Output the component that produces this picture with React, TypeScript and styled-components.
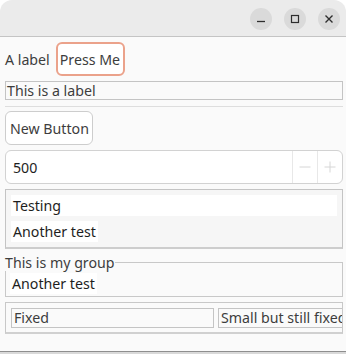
import React from "react";
import styled, { createGlobalStyle } from "styled-components";

const GlobalStyle = createGlobalStyle`
  html, body {
    margin: 0;
    padding: 0;
    background: #d9d9d9;
  }
  * {
    box-sizing: border-box;
  }
  body {
    font-family: "Noto Sans", "DejaVu Sans", sans-serif;
    font-size: 14.2px;
    color: #3d3d3d;
  }
`;

const Window = styled.div`
  width: 346px;
  height: 352px;
  display: flex;
  flex-direction: column;
  background: #ffffff;
`;

const TitleBar = styled.header`
  height: 37px;
  flex: none;
  background: #ebebeb;
  border-bottom: 1px solid #c4c4c4;
  border-radius: 12px 12px 0 0;
  display: flex;
  align-items: center;
  justify-content: flex-end;
  gap: 12px;
  padding-right: 6px;
`;

const WinButton = styled.button`
  width: 22px;
  height: 22px;
  border-radius: 50%;
  border: none;
  padding: 0;
  background: #dadada;
  display: flex;
  align-items: center;
  justify-content: center;
  margin-top: 1px;
`;

const Body = styled.main`
  flex: 1;
  background: #fafafa;
  border-bottom: 1px solid #8e8e8e;
  padding: 5px 3px 0 5px;
  display: flex;
  flex-direction: column;
  gap: 5px;
`;

const Row = styled.div`
  display: flex;
  align-items: center;
  gap: 6px;
`;

const Text = styled.span`
  line-height: 17px;
  white-space: nowrap;
`;

const Button = styled.button<{ $focused?: boolean }>`
  height: 34px;
  font: inherit;
  color: #3d3d3d;
  background: #ffffff;
  border-radius: 6px;
  border: ${(p) => (p.$focused ? "2px solid #eba28b" : "1px solid #cdcdcd")};
  padding: ${(p) => (p.$focused ? "0 3px 0 2px" : "0 3px 0 4px")};
  align-self: flex-start;
  cursor: pointer;
`;

const BoxedLabel = styled.div`
  height: 19px;
  border: 1px solid #c4c4c4;
  padding: 0 1px;
  line-height: 17px;
  white-space: nowrap;
  overflow: hidden;
`;

const Separator = styled.hr`
  margin: 1px 0 -1px;
  border: none;
  height: 1px;
  background: #dedede;
`;

const Spin = styled.div`
  height: 34px;
  display: flex;
  background: #ffffff;
  border: 1px solid #d2d2d2;
  border-radius: 6px;
  overflow: hidden;
`;

const SpinEntry = styled.input`
  flex: 1;
  min-width: 0;
  border: none;
  outline: none;
  background: transparent;
  font: inherit;
  color: #1e1e1e;
  padding: 0 0 0 7px;
`;

const SpinButton = styled.button`
  width: 25px;
  border: none;
  border-left: 1px solid #e8e8e8;
  background: transparent;
  padding: 0;
  display: flex;
  align-items: center;
  justify-content: center;
`;

const ListBox = styled.div`
  height: 60px;
  border: 1px solid #c4c4c4;
  border-bottom: 2px solid #cdcdcd;
  background: #f6f6f6;
  padding: 5px 5px 0;
  display: flex;
  flex-direction: column;
  gap: 5px;
`;

const ListRow = styled.div<{ $fill?: boolean }>`
  height: 21px;
  line-height: 21px;
  background: #ffffff;
  color: #1e1e1e;
  padding: 0 2px;
  align-self: ${(p) => (p.$fill ? "stretch" : "flex-start")};
  white-space: nowrap;
`;

const Group = styled.fieldset`
  margin: 0;
  padding: 0 0 2px 4px;
  border: 1px solid #c8c8c8;
  min-width: 0;
`;

const GroupTitle = styled.legend`
  padding: 0;
  margin-left: -5px;
  line-height: 17px;
`;

const GroupBody = styled.div`
  padding-top: 2px;
  display: flex;
`;

const FixedFrame = styled.div`
  height: 32px;
  border: 1px solid #c8c8c8;
  border-bottom: 2px solid #d0d0d0;
  padding: 5px 0 0 5px;
  display: flex;
  gap: 4px;
  overflow: hidden;
`;

const FixedLabel = styled.div<{ $w: number }>`
  flex: none;
  width: ${(p) => p.$w}px;
  height: 20px;
  border: 1px solid #c4c4c4;
  line-height: 18px;
  padding: 0 2px;
  white-space: nowrap;
  overflow: hidden;
`;

const Icon = ({ children }: { children: React.ReactNode }) => (
  <svg width="12" height="12" viewBox="0 0 12 12" fill="none">
    {children}
  </svg>
);

export default function App() {
  return (
    <>
      <GlobalStyle />
      <Window>
        <TitleBar>
          <WinButton aria-label="Minimize">
            <Icon>
              <path d="M2 8.5h8" stroke="#2e2e2e" strokeWidth="1.3" />
            </Icon>
          </WinButton>
          <WinButton aria-label="Maximize">
            <Icon>
              <rect x="2.5" y="2.5" width="7" height="7" stroke="#2e2e2e" strokeWidth="1.2" />
            </Icon>
          </WinButton>
          <WinButton aria-label="Close">
            <Icon>
              <path d="M2.5 2.5l7 7M9.5 2.5l-7 7" stroke="#2e2e2e" strokeWidth="1.4" />
            </Icon>
          </WinButton>
        </TitleBar>
        <Body>
          <Row>
            <Text>A label</Text>
            <Button $focused>Press Me</Button>
          </Row>
          <BoxedLabel>This is a label</BoxedLabel>
          <Separator />
          <Button>New Button</Button>
          <Spin>
            <SpinEntry defaultValue="500" />
            <SpinButton aria-label="Decrease">
              <Icon>
                <path d="M0.5 6h11" stroke="#d6d6d6" strokeWidth="1" />
              </Icon>
            </SpinButton>
            <SpinButton aria-label="Increase">
              <Icon>
                <path d="M0.5 6h11M6 0.5v11" stroke="#d6d6d6" strokeWidth="1" />
              </Icon>
            </SpinButton>
          </Spin>
          <ListBox>
            <ListRow $fill>Testing</ListRow>
            <ListRow>Another test</ListRow>
          </ListBox>
          <Group>
            <GroupTitle>This is my group</GroupTitle>
            <GroupBody>
              <ListRow>Another test</ListRow>
            </GroupBody>
          </Group>
          <FixedFrame>
            <FixedLabel $w={203}>Fixed</FixedLabel>
            <FixedLabel $w={140}>Small but still fixed</FixedLabel>
          </FixedFrame>
        </Body>
      </Window>
    </>
  );
}
